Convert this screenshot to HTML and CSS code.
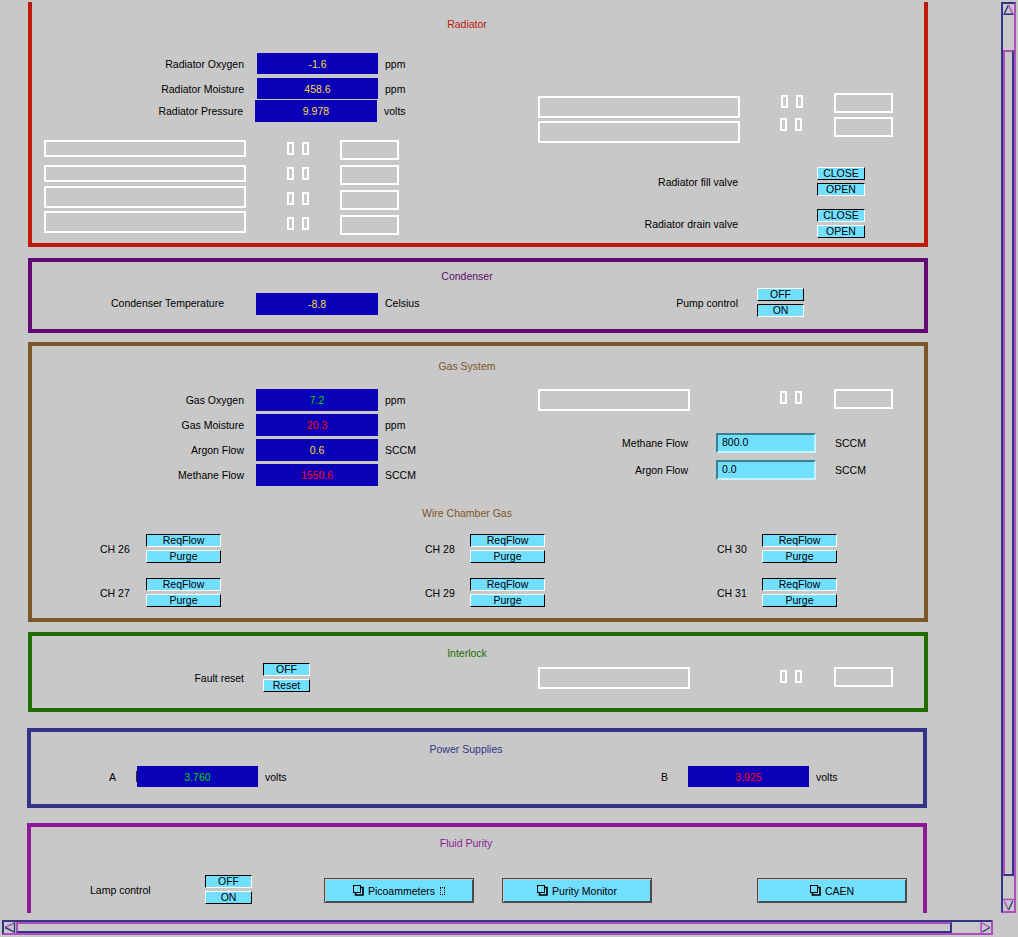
FILE: index.html
```html
<!DOCTYPE html>
<html>
<head>
<meta charset="utf-8">
<title>Detector Gas Control</title>
<link rel="stylesheet" href="styles.css">
</head>
<body>
<div class="window">
  <div class="view">

    <section class="panel p-rad">
      <div class="title c-red mt16">Radiator</div>
      <div class="cols">
        <div class="col">
          <div class="row h21 mt23"><span class="lbl w212">Radiator Oxygen</span><span class="val w121 ml13 yel">-1.6</span><span class="unit">ppm</span></div>
          <div class="row h21 mt4"><span class="lbl w212">Radiator Moisture</span><span class="val w121 ml13 yel">458.6</span><span class="unit">ppm</span></div>
          <div class="row h22 mt1"><span class="lbl w211">Radiator Pressure</span><span class="val w122 ml12 yel">9.978</span><span class="unit">volts</span></div>
          <div class="brow h25 mt18"><span class="wbox w202 h17 ml12"></span><span class="tofu ml41 mt2"><i></i><i></i></span><span class="sbox ml31"></span></div>
          <div class="brow h21"><span class="wbox w202 h17 ml12"></span><span class="tofu ml41 mt2"><i></i><i></i></span><span class="sbox ml31"></span></div>
          <div class="brow h25"><span class="wbox w202 h22 ml12"></span><span class="tofu ml41 mt6"><i></i><i></i></span><span class="sbox ml31 mt4"></span></div>
          <div class="brow h25"><span class="wbox w202 h22 ml12"></span><span class="tofu ml41 mt6"><i></i><i></i></span><span class="sbox ml31 mt4"></span></div>
        </div>
        <div class="col">
          <div class="brow h24 mt63"><span class="wbox w202 h22 ml38 mt3"></span><span class="tofu ml41 mt2"><i></i><i></i></span><span class="sbox ml31"></span></div>
          <div class="brow h26"><span class="wbox w202 h22 ml38 mt4"></span><span class="tofu ml40 mt1"><i></i><i></i></span><span class="sbox ml32"></span></div>
          <div class="row mt24"><span class="lbl w238">Radiator fill valve</span><span class="choice w48 ml79"><span class="btn raised">CLOSE</span><span class="btn sunken">OPEN</span></span></div>
          <div class="row mt13"><span class="lbl w238">Radiator drain valve</span><span class="choice w48 ml79"><span class="btn sunken">CLOSE</span><span class="btn raised">OPEN</span></span></div>
        </div>
      </div>
    </section>

    <section class="panel p-cond">
      <div class="title c-pur mt8">Condenser</div>
      <div class="row top mt6">
        <span class="lbl w192 mid">Condenser Temperature</span>
        <span class="val w122 h22 ml32 mt5 yel">-8.8</span>
        <span class="unit w100 mid">Celsius</span>
        <span class="lbl w253 mid">Pump control</span>
        <span class="choice w47 ml19"><span class="btn raised">OFF</span><span class="btn sunken">ON</span></span>
      </div>
    </section>

    <section class="panel p-gas">
      <div class="title c-brn mt14">Gas System</div>
      <div class="cols mt17">
        <div class="col gap3">
          <div class="row h22"><span class="lbl w212">Gas Oxygen</span><span class="val w122 ml12 grn">7.2</span><span class="unit">ppm</span></div>
          <div class="row h22"><span class="lbl w212">Gas Moisture</span><span class="val w122 ml12 red">20.3</span><span class="unit">ppm</span></div>
          <div class="row h22"><span class="lbl w212">Argon Flow</span><span class="val w122 ml12 yel">0.6</span><span class="unit">SCCM</span></div>
          <div class="row h22"><span class="lbl w212">Methane Flow</span><span class="val w122 ml12 red">1550.6</span><span class="unit">SCCM</span></div>
        </div>
        <div class="col">
          <div class="brow h22"><span class="wbox w152 h22 ml38"></span><span class="tofu ml90 mt2"><i></i><i></i></span><span class="sbox ml32"></span></div>
          <div class="row h20 mt22"><span class="lbl w188">Methane Flow</span><span class="entry ml28">800.0</span><span class="unit ml19">SCCM</span></div>
          <div class="row h20 mt7"><span class="lbl w188">Argon Flow</span><span class="entry ml28">0.0</span><span class="unit ml19">SCCM</span></div>
        </div>
      </div>
      <div class="title c-brn mt21">Wire Chamber Gas</div>
      <div class="row mt15">
        <span class="ch ml68 w46">CH 26</span><span class="choice w75"><span class="btn sunken">ReqFlow</span><span class="btn raised">Purge</span></span>
        <span class="ch ml204 w45">CH 28</span><span class="choice w75"><span class="btn sunken">ReqFlow</span><span class="btn raised">Purge</span></span>
        <span class="ch ml172 w45">CH 30</span><span class="choice w75"><span class="btn sunken">ReqFlow</span><span class="btn raised">Purge</span></span>
      </div>
      <div class="row mt15">
        <span class="ch ml68 w46">CH 27</span><span class="choice w75"><span class="btn sunken">ReqFlow</span><span class="btn raised">Purge</span></span>
        <span class="ch ml204 w45">CH 29</span><span class="choice w75"><span class="btn sunken">ReqFlow</span><span class="btn raised">Purge</span></span>
        <span class="ch ml172 w45">CH 31</span><span class="choice w75"><span class="btn sunken">ReqFlow</span><span class="btn raised">Purge</span></span>
      </div>
    </section>

    <section class="panel p-int">
      <div class="title c-grn mt11">Interlock</div>
      <div class="row top mt4">
        <span class="lbl w212 mid">Fault reset</span>
        <span class="choice w47 ml19"><span class="btn sunken">OFF</span><span class="btn raised">Reset</span></span>
        <span class="wbox w152 h22 ml228 mt4"></span>
        <span class="tofu ml90 mt7"><i></i><i></i></span>
        <span class="sbox ml32 mt4"></span>
      </div>
    </section>

    <section class="panel p-pow">
      <div class="title c-nav mt11">Power Supplies</div>
      <div class="row h21 mt11">
        <span class="ch ml78 w28">A</span><span class="tick"></span>
        <span class="val w121 grn">3.760</span>
        <span class="unit w396">volts</span>
        <span class="ch w27">B</span>
        <span class="val w121 red">3.925</span>
        <span class="unit">volts</span>
      </div>
    </section>

    <section class="panel p-fluid">
      <div class="title c-mag mt10">Fluid Purity</div>
      <div class="row top mt26">
        <span class="ch ml59 w115 mid">Lamp control</span>
        <span class="choice w47"><span class="btn sunken">OFF</span><span class="btn raised">ON</span></span>
        <span class="rd ml72 mt3"><svg class="rdicon" width="11" height="11" viewBox="0 0 11 11"><rect x="0.5" y="0.5" width="7" height="7" fill="none" stroke="#000"/><path d="M2.5 8 V10 H10 V2.5 H8" fill="none" stroke="#000" stroke-width="1.6"/></svg>Picoammeters<span class="dots"></span></span>
        <span class="rd ml28 mt3"><svg class="rdicon" width="11" height="11" viewBox="0 0 11 11"><rect x="0.5" y="0.5" width="7" height="7" fill="none" stroke="#000"/><path d="M2.5 8 V10 H10 V2.5 H8" fill="none" stroke="#000" stroke-width="1.6"/></svg>Purity Monitor</span>
        <span class="rd ml105 mt3"><svg class="rdicon" width="11" height="11" viewBox="0 0 11 11"><rect x="0.5" y="0.5" width="7" height="7" fill="none" stroke="#000"/><path d="M2.5 8 V10 H10 V2.5 H8" fill="none" stroke="#000" stroke-width="1.6"/></svg>CAEN</span>
      </div>
    </section>

  </div>

  <div class="vscroll">
    <span class="arr-v"><svg width="11" height="11" viewBox="0 0 11 11"><path d="M5.5 1 L1.2 10" stroke="#343386" stroke-width="1.4" fill="none"/><path d="M5.5 1 L9.8 10" stroke="#ae4ebc" stroke-width="1.4" fill="none"/><path d="M0.5 10.2 H10.5" stroke="#343386" stroke-width="1.6"/></svg></span>
    <span class="vthumb"></span>
    <span class="arr-v down"><svg width="11" height="13" viewBox="0 0 11 13"><path d="M0 1.5 H11" stroke="#ae4ebc" stroke-width="1.6"/><path d="M1.2 3 L5.5 12" stroke="#ae4ebc" stroke-width="1.4" fill="none"/><path d="M9.8 3 L5.5 12" stroke="#343386" stroke-width="1.4" fill="none"/></svg></span>
  </div>

  <div class="hscroll">
    <span class="arr-h"><svg width="12" height="11" viewBox="0 0 12 11"><path d="M1 5.5 L10 1.2" stroke="#ae4ebc" stroke-width="1.4" fill="none"/><path d="M1 5.5 L10 9.8" stroke="#343386" stroke-width="1.4" fill="none"/><path d="M10.5 0 V11" stroke="#343386" stroke-width="1.4"/></svg></span>
    <span class="hthumb"></span>
    <span class="arr-h right"><svg width="11" height="11" viewBox="0 0 11 11"><path d="M1.2 0 V11" stroke="#ae4ebc" stroke-width="1.6"/><path d="M2.5 1.2 L10 5.5" stroke="#ae4ebc" stroke-width="1.4" fill="none"/><path d="M2.5 9.8 L10 5.5" stroke="#343386" stroke-width="1.4" fill="none"/></svg></span>
  </div>
</div>
</body>
</html>
```

FILE: styles.css
```css
* { box-sizing: border-box; }
html, body { margin: 0; padding: 0; }
body {
  background: #c8c8c8;
  font-family: "Liberation Sans", Arial, sans-serif;
  font-size: 10.5px;
  color: #000;
  overflow: hidden;
}
.window {
  display: grid;
  grid-template-columns: 1001px 15px;
  grid-template-rows: 913px 24px;
  width: 1018px;
  height: 937px;
}
.view { overflow: hidden; padding-top: 2px; }

/* panels */
.panel { display: flow-root; border: 4px solid; width: 900px; margin-left: 28px; }
.p-rad { border-color: #be190b; border-top: 0; height: 245px; }
.p-cond { border-color: #610a75; height: 75px; margin-top: 11px; }
.p-gas { border-color: #7d5627; height: 280px; margin-top: 9px; }
.p-int { border-color: #216c00; height: 80px; margin-top: 10px; }
.p-pow { border-color: #343386; height: 80px; margin-top: 16px; margin-left: 27px; }
.p-fluid { border-color: #8b1a96; border-bottom: 0; height: 100px; margin-top: 15px; margin-left: 27px; }

.title { width: 870px; height: 12px; line-height: 12px; text-align: center; white-space: nowrap; }
.c-red { color: #be190b; }
.c-pur { color: #610a75; }
.c-brn { color: #7d5627; }
.c-grn { color: #216c00; }
.c-nav { color: #343386; }
.c-mag { color: #8b1a96; }

.cols { display: grid; grid-template-columns: 468px 424px; }
.col { display: flex; flex-direction: column; align-items: flex-start; }
.gap3 { gap: 3px; }

.row { display: flex; align-items: center; flex: none; }
.row.top { align-items: flex-start; }
.brow { display: flex; align-items: flex-start; flex: none; }
.mid { align-self: center; }

.lbl { text-align: right; white-space: nowrap; flex: none; }
.ch { white-space: nowrap; flex: none; }
.unit { margin-left: 7px; white-space: nowrap; flex: none; }

.val {
  background: #0a00b8;
  align-self: stretch;
  display: flex;
  align-items: center;
  justify-content: center;
  flex: none;
}
.row.top .val { align-self: flex-start; }
.yel { color: #f9da3c; }
.grn { color: #00d800; }
.red { color: #fd0000; }

.tick { width: 1px; height: 11px; background: #2d2d2d; margin-left: -1px; flex: none; }

.wbox { border: 2px solid #fff; flex: none; }
.sbox { border: 2px solid #fff; width: 59px; height: 20px; flex: none; }
.tofu { display: flex; gap: 8px; flex: none; }
.tofu i { display: block; width: 7px; height: 13px; border: 2px solid #fff; }

/* choice buttons */
.choice { display: flex; flex-direction: column; gap: 3px; flex: none; }
.btn {
  display: block;
  height: 13px;
  line-height: 11px;
  background: #73dfff;
  border: 1px solid;
  text-align: center;
  white-space: nowrap;
}
.raised { border-color: #fff #000 #000 #fff; }
.sunken { border-color: #000 #fff #fff #000; }

/* text entry */
.entry {
  width: 100px;
  height: 20px;
  background: #73dfff;
  border: 2px solid;
  border-color: #3b7d92 #c4f4ff #c4f4ff #3b7d92;
  padding-left: 4px;
  line-height: 15px;
  flex: none;
}

/* related display buttons */
.rd {
  width: 150px;
  height: 25px;
  background: #73dfff;
  border: 1px solid #4a4a4a;
  box-shadow: inset 1px 1px 0 #c8c8c8, inset -1px -1px 0 #4a4a4a;
  display: flex;
  align-items: center;
  justify-content: center;
  gap: 4px;
  white-space: nowrap;
  flex: none;
}
.rdicon { flex: none; }
.dots { display: inline-block; width: 5px; height: 8px; border: 1px dotted #000; margin-left: 1px; }

/* scrollbars */
.vscroll {
  margin-top: 2px;
  height: 911px;
  border: 2px solid;
  border-color: #343386 #ae4ebc #ae4ebc #343386;
  display: flex;
  flex-direction: column;
}
.arr-v { display: block; height: 11px; flex: none; }
.arr-v svg { display: block; }
.arr-v.down { height: 13px; margin-top: auto; }
.vthumb {
  display: block;
  margin-top: 35px;
  height: 826px;
  border: 2px solid;
  border-color: #ae4ebc #343386 #343386 #ae4ebc;
  flex: none;
}
.hscroll {
  grid-column: 1 / 3;
  margin: 7px 0 0 2px;
  width: 991px;
  height: 15px;
  border: 2px solid;
  border-color: #343386 #ae4ebc #ae4ebc #343386;
  display: flex;
}
.arr-h { display: block; width: 12px; flex: none; }
.arr-h svg { display: block; }
.arr-h.right { width: 11px; margin-left: auto; }
.hthumb {
  display: block;
  width: 936px;
  border: 2px solid;
  border-color: #ae4ebc #343386 #343386 #ae4ebc;
  flex: none;
}

/* sizes */
.h17 { height: 17px; }
.h20 { height: 20px; }
.h21 { height: 21px; }
.h22 { height: 22px; }
.h24 { height: 24px; }
.h25 { height: 25px; }
.h26 { height: 26px; }
.w27 { width: 27px; }
.w28 { width: 28px; }
.w45 { width: 45px; }
.w46 { width: 46px; }
.w47 { width: 47px; }
.w48 { width: 48px; }
.w75 { width: 75px; }
.w100 { width: 100px; }
.w115 { width: 115px; }
.w121 { width: 121px; }
.w122 { width: 122px; }
.w152 { width: 152px; }
.w188 { width: 188px; }
.w192 { width: 192px; }
.w202 { width: 202px; }
.w211 { width: 211px; }
.w212 { width: 212px; }
.w238 { width: 238px; }
.w253 { width: 253px; }
.w396 { width: 396px; }

.ml12 { margin-left: 12px; }
.ml13 { margin-left: 13px; }
.ml19 { margin-left: 19px; }
.ml28 { margin-left: 28px; }
.ml31 { margin-left: 31px; }
.ml32 { margin-left: 32px; }
.ml38 { margin-left: 38px; }
.ml40 { margin-left: 40px; }
.ml41 { margin-left: 41px; }
.ml59 { margin-left: 59px; }
.ml68 { margin-left: 68px; }
.ml72 { margin-left: 72px; }
.ml78 { margin-left: 78px; }
.ml79 { margin-left: 79px; }
.ml90 { margin-left: 90px; }
.ml105 { margin-left: 105px; }
.ml172 { margin-left: 172px; }
.ml204 { margin-left: 204px; }
.ml228 { margin-left: 228px; }

.mt1 { margin-top: 1px; }
.mt2 { margin-top: 2px; }
.mt3 { margin-top: 3px; }
.mt4 { margin-top: 4px; }
.mt5 { margin-top: 5px; }
.mt6 { margin-top: 6px; }
.mt7 { margin-top: 7px; }
.mt8 { margin-top: 8px; }
.mt10 { margin-top: 10px; }
.mt11 { margin-top: 11px; }
.mt13 { margin-top: 13px; }
.mt14 { margin-top: 14px; }
.mt15 { margin-top: 15px; }
.mt16 { margin-top: 16px; }
.mt17 { margin-top: 17px; }
.mt18 { margin-top: 18px; }
.mt21 { margin-top: 21px; }
.mt22 { margin-top: 22px; }
.mt23 { margin-top: 23px; }
.mt24 { margin-top: 24px; }
.mt26 { margin-top: 26px; }
.mt63 { margin-top: 63px; }
```
